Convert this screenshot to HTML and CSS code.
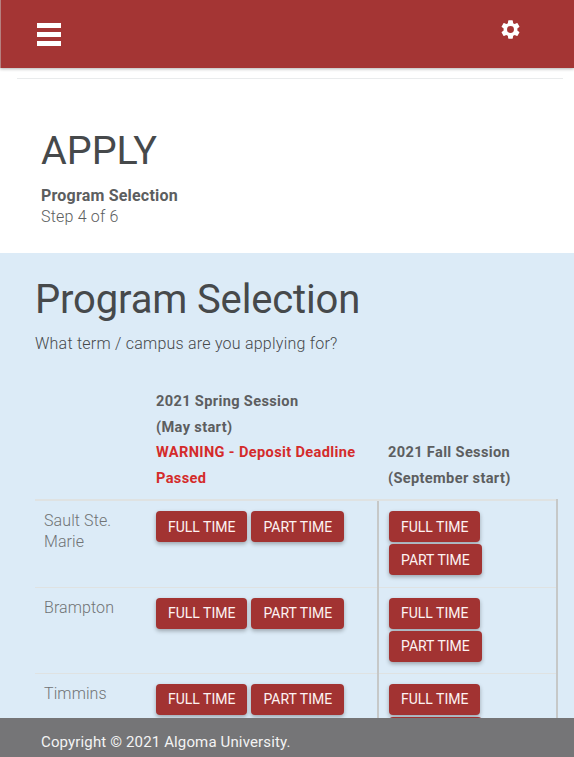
FILE: index.html
```html
<!DOCTYPE html>
<html lang="en">
<head>
    <meta charset="UTF-8">
    <meta name="viewport" content="width=device-width, initial-scale=1.0">
    <title>Apply - Program Selection</title>
    <link rel="stylesheet" href="styles.css">
</head>
<body>

    <header class="top-bar">
        <div class="menu-icon"><span></span><span></span><span></span></div>
        <svg class="gear-icon" viewBox="0 0 24 24" width="23" height="23">
            <path fill="#fff" d="M19.14 12.94c.04-.3.06-.61.06-.94s-.02-.64-.07-.94l2.03-1.58a.49.49 0 0 0 .12-.61l-1.92-3.32a.49.49 0 0 0-.59-.22l-2.39.96a7 7 0 0 0-1.62-.94l-.36-2.54a.48.48 0 0 0-.48-.41h-3.84a.48.48 0 0 0-.47.41l-.36 2.54c-.59.24-1.13.57-1.62.94l-2.39-.96a.48.48 0 0 0-.59.22L2.74 8.87a.48.48 0 0 0 .12.61l2.03 1.58c-.05.3-.09.63-.09.94s.02.64.07.94l-2.03 1.58a.49.49 0 0 0-.12.61l1.92 3.32c.12.22.37.29.59.22l2.39-.96c.5.38 1.03.7 1.62.94l.36 2.54c.05.24.24.41.48.41h3.84c.24 0 .44-.17.47-.41l.36-2.54a7 7 0 0 0 1.62-.94l2.39.96c.22.08.47 0 .59-.22l1.92-3.32a.48.48 0 0 0-.12-.61l-2.01-1.58zM12 15.6a3.6 3.6 0 1 1 0-7.2 3.6 3.6 0 0 1 0 7.2z"/>
        </svg>
    </header>

    <div class="top-rule"></div>

    <section class="apply-head">
        <h1>APPLY</h1>
        <p class="step-title">Program Selection</p>
        <p class="step-count">Step 4 of 6</p>
    </section>

    <main class="selection">
        <h2>Program Selection</h2>
        <p class="question">What term / campus are you applying for?</p>

        <table class="terms">
            <thead>
                <tr>
                    <th class="campus-col"></th>
                    <th class="spring-col">
                        2021 Spring Session<br>(May start)<br>
                        <span class="warning">WARNING - Deposit Deadline Passed</span>
                    </th>
                    <th class="fall-col">2021 Fall Session<br>(September start)</th>
                </tr>
            </thead>
            <tbody>
                <tr>
                    <td class="campus">Sault Ste. Marie</td>
                    <td class="spring"><button>FULL TIME</button><button>PART TIME</button></td>
                    <td class="fall"><button>FULL TIME</button><button>PART TIME</button></td>
                </tr>
                <tr>
                    <td class="campus">Brampton</td>
                    <td class="spring"><button>FULL TIME</button><button>PART TIME</button></td>
                    <td class="fall"><button>FULL TIME</button><button>PART TIME</button></td>
                </tr>
                <tr>
                    <td class="campus">Timmins</td>
                    <td class="spring"><button>FULL TIME</button><button>PART TIME</button></td>
                    <td class="fall"><button>FULL TIME</button><button>PART TIME</button></td>
                </tr>
            </tbody>
        </table>
    </main>

    <footer class="copyright">Copyright © 2021 Algoma University.</footer>

</body>
</html>
```

FILE: styles.css
```css
html, body {
    height: 757px;
    overflow: hidden;
}
body {
    margin: 0;
    position: relative;
    font-family: Roboto, "Liberation Sans", sans-serif;
    color: #46494b;
    background-color: #fff;
}
.top-bar {
    height: 68px;
    box-sizing: border-box;
    padding: 23px 52px 0 36px;
    display: flex;
    justify-content: space-between;
    align-items: flex-start;
    background-color: #a43534;
    border-left: 1px solid #b5807f;
    box-shadow: 0 1px 3px rgba(0, 0, 0, 0.3);
}
.menu-icon {
    display: flex;
    flex-direction: column;
    gap: 4px;
    width: 24px;
}
.menu-icon span {
    height: 5px;
    background-color: #fff;
}
.gear-icon {
    margin-top: -5px;
}
.top-rule {
    height: 1px;
    margin: 10px 11px 0 17px;
    background-color: #e9ebec;
}
.apply-head {
    height: 174px;
    box-sizing: border-box;
    padding: 49px 41px 0;
}
.apply-head h1 {
    margin: 0 0 11px;
    font-size: 39.5px;
    line-height: 46px;
    font-weight: 400;
}
.apply-head p {
    margin: 0;
    font-size: 16px;
    line-height: 21px;
    letter-spacing: 0.2px;
}
.step-title {
    font-weight: 700;
    color: #5c5e60;
}
.step-count {
    font-weight: 300;
    color: #5c5e60;
}
.selection {
    height: 504px;
    box-sizing: border-box;
    padding: 24px 16px 0 35px;
    background-color: #dcebf7;
}
.selection h2 {
    margin: 0 0 9px;
    font-size: 40px;
    line-height: 46px;
    font-weight: 400;
    letter-spacing: -0.15px;
}
.question {
    margin: 0 0 33px;
    font-size: 16px;
    line-height: 24px;
    font-weight: 300;
    letter-spacing: 0.23px;
}
.terms {
    width: 523px;
    table-layout: fixed;
    border-collapse: collapse;
}
.terms th {
    box-sizing: border-box;
    padding: 0 10px 8px;
    vertical-align: bottom;
    text-align: left;
    font-size: 14.6px;
    line-height: 25.6px;
    font-weight: 700;
    color: #5c5e60;
    letter-spacing: 0.35px;
}
.campus-col {
    width: 111px;
}
.spring-col {
    width: 232px;
}
.terms .warning {
    color: #d42b2b;
}
.terms td {
    height: 86px;
    box-sizing: border-box;
    padding: 10px 0 0 10px;
    vertical-align: top;
    border-top: 1px solid #dfe2e2;
}
.terms tbody tr:first-child td {
    height: 87px;
    border-top-width: 2px;
}
.terms tbody tr td.campus {
    padding: 9px 20px 0 9px;
    font-size: 16px;
    line-height: 21px;
    font-weight: 300;
    letter-spacing: 0.1px;
    color: #707375;
}
.terms .fall {
    border-left: 2px solid #c6c8c8;
    border-right: 2px solid #c6c8c8;
}
button {
    display: inline-block;
    height: 31px;
    padding: 0 12px;
    margin: 0 4px 2px 0;
    vertical-align: top;
    font-family: Roboto, "Liberation Sans", sans-serif;
    font-size: 14px;
    color: #fdf3f3;
    background-color: #a23332;
    border: none;
    border-radius: 4px;
    box-shadow: 0 2px 4px rgba(0, 0, 0, 0.3);
    cursor: pointer;
}
.fall button {
    display: block;
}
.copyright {
    position: absolute;
    left: 0;
    right: 0;
    bottom: 0;
    height: 39px;
    box-sizing: border-box;
    padding: 14px 41px 0;
    font-size: 15px;
    line-height: 20px;
    letter-spacing: 0.14px;
    color: #f3f3f3;
    background-color: #757577;
}
```
